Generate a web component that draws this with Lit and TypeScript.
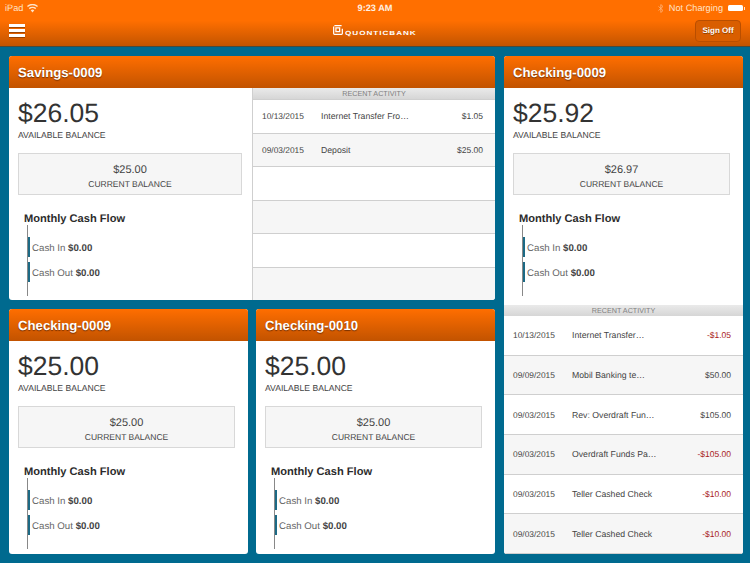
import { LitElement, css, html } from "lit";
import { customElement, property } from "lit/decorators.js";

type Tx = { date: string; name: string; amount: string };

const savingsTx: Tx[] = [
  { date: "10/13/2015", name: "Internet Transfer Fro…", amount: "$1.05" },
  { date: "09/03/2015", name: "Deposit", amount: "$25.00" },
  { date: "", name: "", amount: "" },
  { date: "", name: "", amount: "" },
  { date: "", name: "", amount: "" },
  { date: "", name: "", amount: "" },
];

const checkingTx: Tx[] = [
  { date: "10/13/2015", name: "Internet Transfer…", amount: "-$1.05" },
  { date: "09/09/2015", name: "Mobil Banking te…", amount: "$50.00" },
  { date: "09/03/2015", name: "Rev: Overdraft Fun…", amount: "$105.00" },
  { date: "09/03/2015", name: "Overdraft Funds Pa…", amount: "-$105.00" },
  { date: "09/03/2015", name: "Teller Cashed Check", amount: "-$10.00" },
  { date: "09/03/2015", name: "Teller Cashed Check", amount: "-$10.00" },
];

@customElement("account-summary")
export class AccountSummary extends LitElement {
  @property() available = "";
  @property() current = "";

  render() {
    return html`
      <div class="big">${this.available}</div>
      <div class="label">AVAILABLE BALANCE</div>
      <div class="current">
        <div class="amt">${this.current}</div>
        <div class="cap">CURRENT BALANCE</div>
      </div>
      <div class="flow-title">Monthly Cash Flow</div>
      <div class="flow">
        <div class="row">Cash In <b>$0.00</b></div>
        <div class="row">Cash Out <b>$0.00</b></div>
      </div>
    `;
  }

  static styles = css`
    :host {
      display: block;
      box-sizing: border-box;
      height: 212px;
      padding: 10px 13px 0 9px;
      color: #333;
    }
    .big {
      font-size: 26.5px;
      line-height: 31px;
      color: #333;
    }
    .label {
      font-size: 8.6px;
      line-height: 12px;
      color: #444;
    }
    .current {
      margin-top: 12px;
      height: 42px;
      box-sizing: border-box;
      background: #f6f6f6;
      border: 1px solid #d8d8d8;
      text-align: center;
      font-size: 8.5px;
      color: #444;
      padding-top: 9px;
    }
    .amt {
      font-size: 11px;
      line-height: 14px;
    }
    .cap {
      line-height: 13px;
      margin-top: 1px;
    }
    .flow-title {
      margin: 17px 0 0 6px;
      font-size: 11.1px;
      font-weight: bold;
      line-height: 14px;
      color: #2b2b2b;
    }
    .flow {
      margin: -1px 0 0 9px;
      border-left: 1px solid #888;
      height: 71px;
      padding-top: 12px;
      box-sizing: border-box;
    }
    .row {
      border-left: 2px solid #1c6a85;
      height: 20px;
      line-height: 23px;
      padding-left: 2px;
      margin-bottom: 5px;
      font-size: 9.7px;
      color: #666;
    }
    .row b {
      color: #444;
    }
  `;
}

@customElement("activity-list")
export class ActivityList extends LitElement {
  @property({ attribute: false }) items: Tx[] = [];

  render() {
    return html`
      <div class="head">RECENT ACTIVITY</div>
      <div class="rows">
        ${this.items.map(
          (t) => html`
            <div class="tx">
              <span class="date">${t.date}</span>
              <span class="name">${t.name}</span>
              <span class="amount ${t.amount.startsWith("-") ? "neg" : ""}"
                >${t.amount}</span
              >
            </div>
          `,
        )}
      </div>
    `;
  }

  static styles = css`
    :host {
      display: flex;
      flex-direction: column;
      color: #444;
    }
    .head {
      height: 11px;
      line-height: 11px;
      flex: none;
      text-align: center;
      font-size: 7.2px;
      color: #808080;
      background: linear-gradient(#eaeaea, #d6d6d6);
    }
    .rows {
      flex: 1;
      display: flex;
      flex-direction: column;
    }
    .tx {
      flex: 1;
      display: flex;
      align-items: center;
      font-size: 8.7px;
      background: #fff;
      border-top: 1px solid #cfcfcf;
      padding: 0 12px 0 9px;
      min-height: 0;
    }
    .tx:nth-child(even) {
      background: #f6f6f6;
    }
    :host(.right-list) .tx {
      border-top: 0;
      border-bottom: 1px solid #cfcfcf;
    }
    .date {
      width: 59px;
      font-size: 8.4px;
      flex: none;
    }
    .name {
      flex: 1;
    }
    .amount {
      font-size: 8.5px;
    }
    .neg {
      color: #a82020;
    }
  `;
}

@customElement("app-root")
export class AppRoot extends LitElement {
  render() {
    return html`
      <header class="top">
        <div class="status">
          <span class="st-left">
            iPad
            <svg width="11" height="9" viewBox="0 0 11 9">
              <path
                d="M5.5 8.5 3.7 6.3a2.6 2.6 0 0 1 3.6 0zM2.7 5.3 1.8 4.1a5.4 5.4 0 0 1 7.4 0L8.3 5.3a4 4 0 0 0-5.6 0zM.9 3 0 2a8 8 0 0 1 11 0l-.9 1a6.7 6.7 0 0 0-9.2 0z"
                fill="#ffe3c8"
              />
            </svg>
          </span>
          <span class="st-time">9:23 AM</span>
          <span class="st-right">
            <svg width="6" height="9" viewBox="0 0 6 9">
              <path
                d="M.5 2.5l4.5 4-2.2 2V.5L5 2.5.5 6.5"
                fill="none"
                stroke="#ffb47a"
                stroke-width=".8"
              />
            </svg>
            Not Charging
            <span class="batt"></span>
          </span>
        </div>
        <div class="nav">
          <div class="burger"><i></i><i></i><i></i></div>
          <div class="logo">
            <svg width="10" height="10" viewBox="0 0 12 12">
              <path
                d="M1.7.8h8.6M.8 1.7v8.6q0 .9.9.9h8.6q.9 0 .9-.9V4.5M3.5 3.5h4.5v4.500h-4.500z"
                fill="none"
                stroke="#fff"
                stroke-width="1.5"
              />
            </svg>
            <span>QUONTICBANK</span>
          </div>
          <div class="signoff">Sign Off</div>
        </div>
      </header>
      <main class="page">
        <div class="left">
          <section class="card wide">
            <h2>Savings-0009</h2>
            <div class="split">
              <account-summary
                class="half"
                available="$26.05"
                current="$25.00"
              ></account-summary>
              <activity-list class="half-list" .items=${savingsTx}></activity-list>
            </div>
          </section>
          <div class="pair">
            <section class="card">
              <h2>Checking-0009</h2>
              <account-summary available="$25.00" current="$25.00"></account-summary>
            </section>
            <section class="card">
              <h2>Checking-0010</h2>
              <account-summary available="$25.00" current="$25.00"></account-summary>
            </section>
          </div>
        </div>
        <section class="card right">
          <h2>Checking-0009</h2>
          <account-summary available="$25.92" current="$26.97"></account-summary>
          <activity-list class="right-list" .items=${checkingTx}></activity-list>
        </section>
      </main>
    `;
  }

  static styles = css`
    :host {
      display: block;
      width: 750px;
      height: 563px;
      overflow: hidden;
      background: #006a8f;
      font-family: "Liberation Sans", Arial, sans-serif;
      text-rendering: geometricPrecision;
    }
    .top {
      height: 47px;
      background: linear-gradient(#ff6f00 0, #ff6f00 45%, #c35400 100%);
      border-bottom: 1px solid #4a4a3a;
      box-sizing: border-box;
      color: #fff;
    }
    .status {
      height: 16px;
      display: grid;
      grid-template-columns: 1fr auto 1fr;
      align-items: center;
      font-size: 9.2px;
      padding: 0 5px;
      color: #ffe3c8;
    }
    .st-left {
      display: flex;
      align-items: center;
      gap: 4px;
    }
    .st-time {
      font-weight: bold;
      color: #fff1e4;
    }
    .st-right {
      display: flex;
      justify-content: flex-end;
      align-items: center;
      gap: 5px;
    }
    .batt {
      position: relative;
      width: 15px;
      height: 6px;
      background: #fff;
      border-radius: 1.5px;
      margin-right: 2px;
    }
    .batt::after {
      content: "";
      position: absolute;
      left: 15.5px;
      top: 1.5px;
      width: 1px;
      height: 3px;
      background: #ffe3c8;
    }
    .nav {
      height: 30px;
      display: grid;
      grid-template-columns: 1fr auto 1fr;
      align-items: center;
      padding: 0 9px;
    }
    .burger {
      display: flex;
      flex-direction: column;
      gap: 2.6px;
      margin-top: -1px;
    }
    .burger i {
      display: block;
      width: 16px;
      height: 2.7px;
      background: #fff;
      box-shadow: 0 1px 0 rgba(90, 40, 0, 0.5);
    }
    .logo {
      display: flex;
      align-items: flex-start;
      gap: 2px;
      height: 12px;
      font-size: 6px;
      font-weight: bold;
      color: #fff;
    }
    .logo span {
      align-self: flex-end;
      line-height: 6px;
      letter-spacing: 0.7px;
      transform: scaleX(1.36);
      transform-origin: left;
      width: 72px;
      white-space: nowrap;
    }
    .signoff {
      justify-self: end;
      width: 46px;
      height: 22px;
      line-height: 20px;
      text-align: center;
      font-size: 8px;
      font-weight: bold;
      border: 1px solid #b94e00;
      border-radius: 4px;
      background: #d95e00;
      box-sizing: border-box;
      text-shadow: 0 1px 0 rgba(90, 40, 0, 0.6);
    }
    .page {
      display: flex;
      gap: 9px;
      padding: 9px 7px 9px 9px;
      height: 516px;
      box-sizing: border-box;
    }
    .left {
      width: 486px;
      display: flex;
      flex-direction: column;
      gap: 9px;
    }
    .pair {
      display: flex;
      gap: 8px;
      height: 245px;
    }
    .pair .card {
      width: 239px;
      flex: none;
    }
    .card {
      background: #fff;
      border-radius: 3px;
      overflow: hidden;
      display: flex;
      flex-direction: column;
    }
    .wide {
      height: 244px;
    }
    .right {
      width: 239px;
    }
    h2 {
      margin: 0;
      flex: none;
      height: 32px;
      line-height: 33px;
      padding-left: 9px;
      font-size: 13.2px;
      color: #fff;
      background: linear-gradient(#ff6e00, #c25300);
      text-shadow: 0 1px 1px rgba(80, 30, 0, 0.7);
    }
    .split {
      flex: 1;
      display: flex;
      min-height: 0;
    }
    .half {
      width: 243px;
      flex: none;
      padding-right: 10px;
    }
    .half-list {
      flex: 1;
      border-left: 1px solid #cfcfcf;
    }
    .right-list {
      flex: 1;
      margin-top: 5px;
    }
  `;
}
